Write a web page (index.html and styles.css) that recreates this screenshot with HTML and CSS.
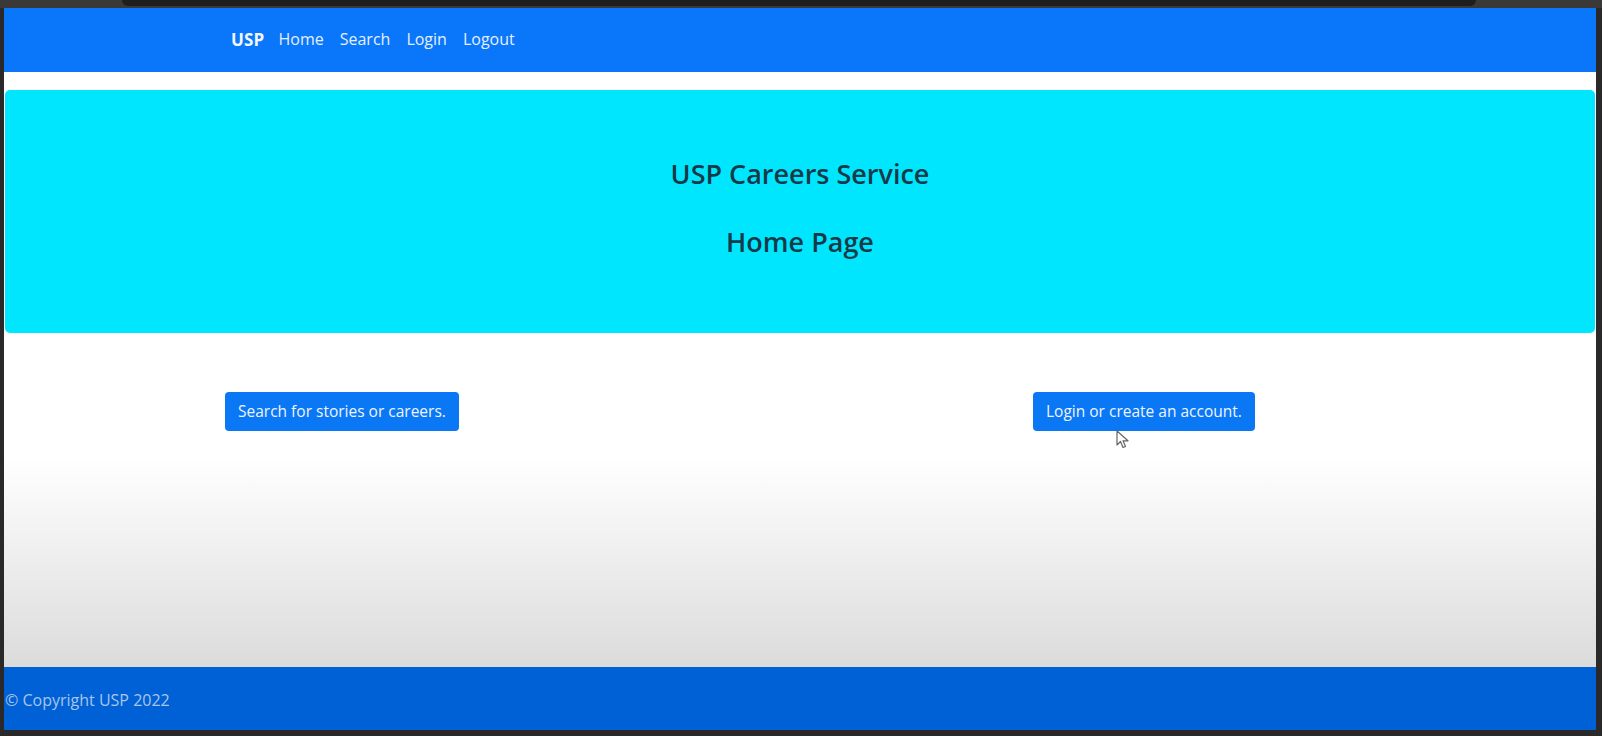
FILE: index.html
```html
<!DOCTYPE html>
<html lang="en">
<head>
<meta charset="utf-8">
<title>USP Careers Service</title>
<link rel="stylesheet" href="styles.css">
</head>
<body>
<div class="topbar"><div class="topbar-tab"></div></div>
<div class="frame">
  <div class="page">
    <nav class="navbar">
      <a class="brand" href="#">USP</a>
      <a class="nav-link" href="#">Home</a>
      <a class="nav-link" href="#">Search</a>
      <a class="nav-link" href="#">Login</a>
      <a class="nav-link" href="#">Logout</a>
    </nav>
    <header class="jumbotron">
      <h3 class="title">USP Careers Service</h3>
      <h3 class="subtitle">Home Page</h3>
    </header>
    <main class="content">
      <div class="actions">
        <div class="col"><a class="btn" href="#">Search for stories or careers.</a></div>
        <div class="col col-right">
          <a class="btn" href="#">Login or create an account.</a>
          <svg class="cursor" width="14" height="20" viewBox="0 0 14 20"><path d="M1 1 L1 15 L4.5 11.5 L7 17.5 L9.5 16.5 L7 10.8 L12 10.8 Z" fill="#fff" stroke="#666" stroke-width="1.2" stroke-linejoin="round"/></svg>
        </div>
      </div>
    </main>
    <footer class="footer">© Copyright USP 2022</footer>
  </div>
</div>
</body>
</html>
```
FILE: styles.css
```css
html, body {
  margin: 0;
  padding: 0;
  background: #2a2828;
  font-family: "Open Sans", "Noto Sans", sans-serif;
}
.topbar {
  height: 8px;
  background: #3b3938;
}
.topbar-tab {
  margin: 0 126px 0 122px;
  height: 6px;
  background: #1f1d1d;
  border-radius: 0 0 6px 6px;
}
.frame {
  padding: 0 6px 6px 4px;
}
.page {
  height: 722px;
  background: #fff;
  display: flex;
  flex-direction: column;
}
.navbar {
  height: 64px;
  background: #0a77fb;
  display: flex;
  align-items: center;
  padding-left: 227px;
  padding-bottom: 2px;
  box-sizing: border-box;
}
.brand {
  color: #f1f6ff;
  font-weight: 700;
  font-size: 17px;
  text-decoration: none;
  margin-right: 14px;
  letter-spacing: 0.2px;
}
.nav-link {
  color: #e6efff;
  font-size: 16px;
  text-decoration: none;
  margin-right: 16px;
}
.jumbotron {
  margin: 18px 1px 0 1px;
  height: 243px;
  background: #00e6ff;
  border-radius: 5px;
  display: flex;
  flex-direction: column;
  align-items: center;
  box-sizing: border-box;
  padding-top: 64px;
}
.title, .subtitle {
  margin: 0;
  font-size: 27px;
  font-weight: 600;
  color: #173a48;
  line-height: 40px;
}
.subtitle {
  margin-top: 28px;
}
.content {
  flex: 1;
  background: linear-gradient(to bottom, #ffffff 0px, #ffffff 125px, #dcdcdc 330px);
  padding-top: 59px;
}
.actions {
  display: grid;
  grid-template-columns: 808px 1fr;
  padding-left: 221px;
}
.col-right {
  position: relative;
}
.btn {
  display: inline-block;
  background: #0a77f5;
  color: #eef5ff;
  font-size: 15.5px;
  line-height: 39px;
  height: 39px;
  padding: 0 13px;
  border-radius: 4px;
  text-decoration: none;
}
.cursor {
  position: absolute;
  left: 83px;
  top: 38px;
}
.footer {
  height: 63px;
  background: #0061d6;
  color: #a9c5ea;
  font-size: 16px;
  display: flex;
  align-items: center;
  padding-left: 1px;
  padding-top: 2px;
  box-sizing: border-box;
}
```
